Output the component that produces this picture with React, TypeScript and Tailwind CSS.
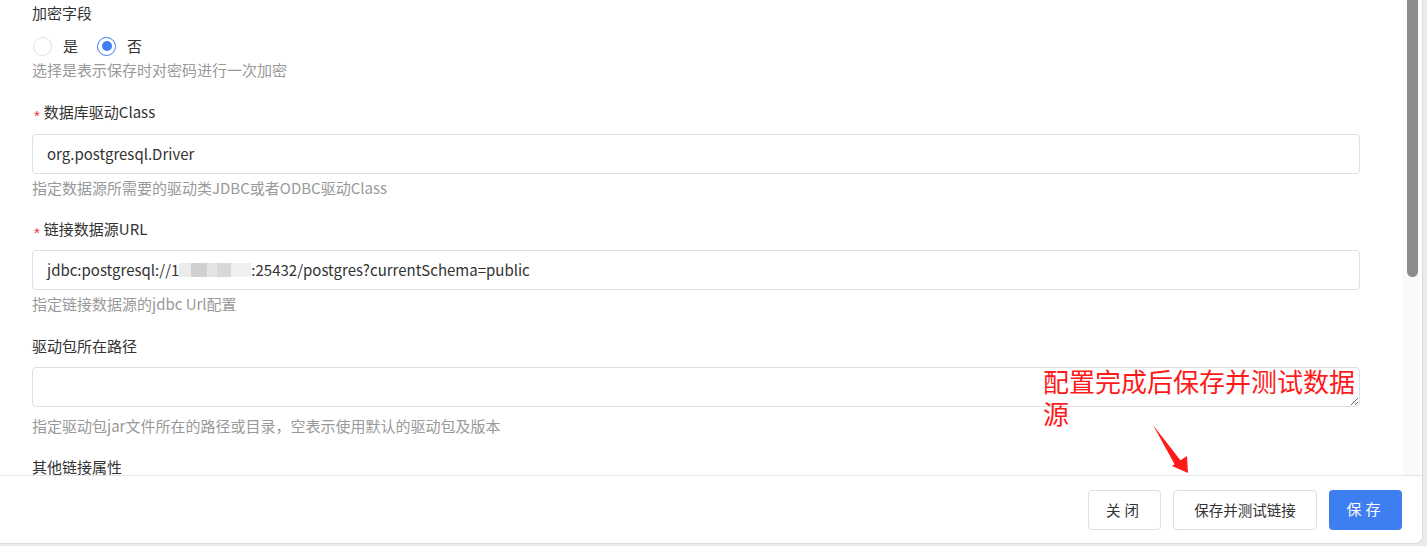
import React from 'react'

const font = { fontFamily: '"Noto Sans CJK SC", "Noto Sans", sans-serif' }

function Label({ text, required }: { text: string; required?: boolean }) {
  return (
    <div className="flex h-[22px] items-center text-[15px] leading-[22px] text-[#333]">
      {required && (
        <span className="mr-[4px] ml-[2px] translate-y-[3px] font-['Liberation_Sans',sans-serif] text-[15px] leading-none text-[#f03030]">
          *
        </span>
      )}
      {text}
    </div>
  )
}

function Help({ text, className = '' }: { text: string; className?: string }) {
  return <div className={`h-[22px] text-[15px] leading-[22px] text-[#999] ${className}`}>{text}</div>
}

function Radio({ label, checked }: { label: string; checked?: boolean }) {
  return (
    <label className="flex items-center">
      <span
        className={`flex h-[19px] w-[19px] items-center justify-center rounded-full border bg-white ${
          checked ? 'border-[#3d7ef0]' : 'border-[#dcdfe6]'
        }`}
      >
        {checked && <span className="h-[10px] w-[10px] rounded-full bg-[#3d7ef0]" />}
      </span>
      <span className="ml-[11px] text-[15px] text-[#333]">{label}</span>
    </label>
  )
}

export default function App() {
  return (
    <div className="h-[546px] w-full bg-[#ebebeb]" style={font}>
      <div className="flex h-[544px] w-[1423px] flex-col overflow-hidden rounded-br-[8px] border-r border-b border-[#dadada] bg-white">
        <div className="relative flex h-[475px] flex-none overflow-hidden">
          <div className="flex-1 pt-[2px] pr-[43px] pl-[32px]">
            <Label text="加密字段" />
            <div className="mt-[11px] flex h-[22px] items-center gap-[19px] pl-[1px]">
              <Radio label="是" />
              <Radio label="否" checked />
            </div>
            <Help text="选择是表示保存时对密码进行一次加密" className="mt-[2px]" />

            <div className="mt-[20px]">
              <Label text="数据库驱动Class" required />
            </div>
            <div className="mt-[11px] flex h-[40px] items-center rounded-[4px] border border-[#dcdfe6] px-[14px] text-[15px] text-[#333]">
              org.postgresql.Driver
            </div>
            <Help text="指定数据源所需要的驱动类JDBC或者ODBC驱动Class" className="mt-[3px]" />

            <div className="mt-[19px]">
              <Label text="链接数据源URL" required />
            </div>
            <div className="mt-[10px] flex h-[40px] items-center rounded-[4px] border border-[#dcdfe6] px-[14px] text-[15px] text-[#333]">
              <span>jdbc:postgresql://1</span>
              <span className="flex h-[18px] w-[72px] items-center">
                <span className="h-[14px] w-[12px] bg-[#ececec]" />
                <span className="h-[14px] w-[16px] bg-[#d0d0d0]" />
                <span className="h-[14px] w-[10px] bg-[#e4e4e4]" />
                <span className="h-[14px] w-[14px] bg-[#d8d8d8]" />
                <span className="h-[14px] w-[20px] bg-[#efefef]" />
              </span>
              <span>:25432/postgres?currentSchema=public</span>
            </div>
            <Help text="指定链接数据源的jdbc Url配置" className="mt-[3px]" />

            <div className="mt-[20px]">
              <Label text="驱动包所在路径" />
            </div>
            <textarea
              className="mt-[10px] block h-[40px] w-full rounded-[4px] border border-[#dcdfe6] px-[14px] py-[8px] text-[15px] text-[#333] outline-none"
              defaultValue=""
            />
            <Help text="指定驱动包jar文件所在的路径或目录，空表示使用默认的驱动包及版本" className="mt-[8px]" />

            <div className="mt-[19px]">
              <Label text="其他链接属性" />
            </div>
          </div>

          <div className="w-[17px] flex-none bg-[#fafafa] pl-[4px]">
            <div className="h-[277px] w-[11px] rounded-b-[6px] bg-[#8c8c8c]" />
          </div>
          <div className="w-[2px] flex-none" />

          <div className="absolute top-[365px] left-[1043px] w-[320px] text-[26px] leading-[32px] text-[#ff1a1a]">
            配置完成后保存并测试数据源
          </div>
          <svg className="absolute top-[420px] left-[1148px]" width="50" height="58" viewBox="0 0 50 58">
            <path d="M5 5 L30 43 L27 45 Z" fill="#ff1a1a" />
            <path d="M40 53 L24 46 L39 36 Z" fill="#ff1a1a" />
            <path d="M5 5 L33 41 L29 44 Z" fill="#ff1a1a" />
          </svg>
        </div>

        <div className="flex flex-1 items-center justify-end gap-[12px] border-t border-[#e6e6e6] pr-[20px]">
          <button className="h-[40px] w-[73px] rounded-[4px] border border-[#dcdfe6] bg-white text-[14.5px] tracking-[4px] text-[#333]">
            关闭
          </button>
          <button className="h-[40px] w-[144px] rounded-[4px] border border-[#dcdfe6] bg-white text-[14.5px] text-[#333]">
            保存并测试链接
          </button>
          <button className="h-[40px] w-[73px] rounded-[4px] bg-[#3d7ef0] text-[15px] tracking-[4px] text-white">
            保存
          </button>
        </div>
      </div>
    </div>
  )
}
